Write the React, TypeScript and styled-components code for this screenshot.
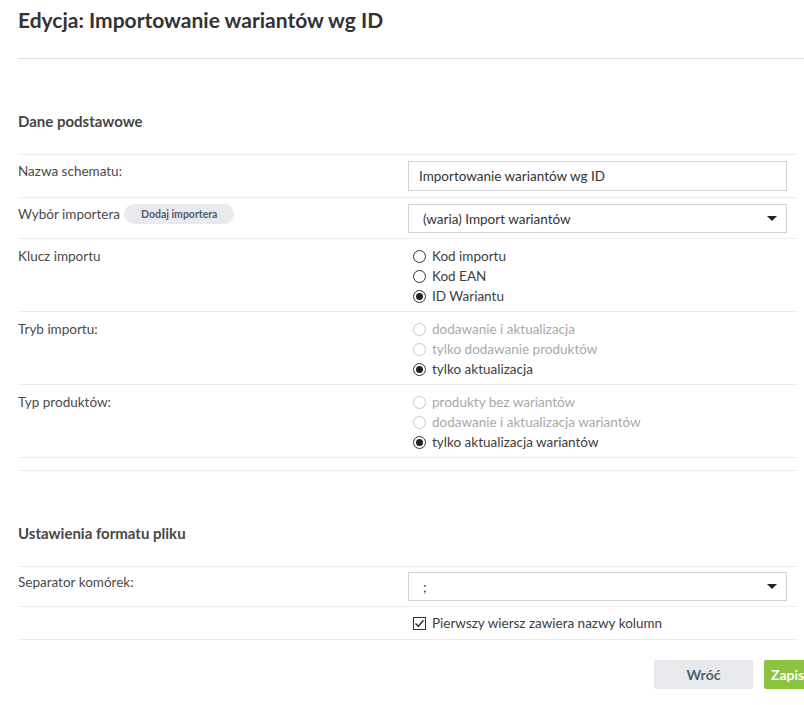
import React from 'react';
import styled, { createGlobalStyle } from 'styled-components';

const GlobalStyle = createGlobalStyle`
  html, body {
    margin: 0;
    padding: 0;
    background: #fff;
    overflow-x: hidden;
  }
  body {
    font-family: Lato, "Liberation Sans", sans-serif;
    color: #4a4a4a;
  }
`;

const Page = styled.div`
  padding-left: 18px;
  width: 779px;
`;

const TitleBar = styled.div`
  padding: 6px 0 24px;
  border-bottom: 1px solid #e2e2e2;
  margin-right: -60px;
  & > h1 {
    margin: 0;
    font-size: 21px;
    line-height: 28px;
    font-weight: 700;
    color: #333;
  }
`;

const SectionTitle = styled.h2`
  margin: 0;
  padding: 52px 0 23px;
  font-size: 15px;
  line-height: 20px;
  font-weight: 700;
  color: #474747;
  border-bottom: 1px solid #ececec;
`;

const Row = styled.div<{ pad?: string }>`
  display: grid;
  grid-template-columns: 390px 379px;
  padding: ${p => p.pad || '6px 0'};
  border-bottom: 1px solid #ececec;
`;

const Spacer = styled.div`
  height: 12px;
  border-bottom: 1px solid #ececec;
`;

const Label = styled.div`
  display: flex;
  align-items: flex-start;
  gap: 4px;
  font-size: 13.5px;
  line-height: 20px;
  color: #4a4a4a;
`;

const Pill = styled.span`
  display: inline-block;
  background: #e9eaed;
  color: #4e6073;
  font-size: 10.5px;
  font-weight: 700;
  line-height: 20px;
  padding: 0 17px;
  border-radius: 10px;
`;

const TextInput = styled.div`
  height: 30px;
  border: 1px solid #d4d4d4;
  box-sizing: border-box;
  padding-left: 10px;
  display: flex;
  align-items: center;
  font-size: 13.5px;
  color: #333;
`;

const Select = styled.div`
  height: 29px;
  border: 1px solid #d4d4d4;
  box-sizing: border-box;
  padding: 0 9px 0 14px;
  display: flex;
  align-items: center;
  justify-content: space-between;
  font-size: 13.5px;
  color: #333;
`;

const Arrow = styled.span`
  width: 0;
  height: 0;
  border-left: 5px solid transparent;
  border-right: 5px solid transparent;
  border-top: 5px solid #222;
`;

const Options = styled.div`
  display: flex;
  flex-direction: column;
  padding-left: 5px;
`;

const Option = styled.div<{ disabled?: boolean }>`
  display: flex;
  align-items: center;
  gap: 6px;
  height: 20px;
  font-size: 13.5px;
  color: ${p => (p.disabled ? '#a9a9a9' : '#3d3d3d')};
`;

const Radio = styled.span<{ checked?: boolean; disabled?: boolean }>`
  width: 13px;
  height: 13px;
  box-sizing: border-box;
  border-radius: 50%;
  border: 1px solid ${p => (p.disabled ? '#c8c8c8' : '#333')};
  display: flex;
  align-items: center;
  justify-content: center;
  &::after {
    content: '';
    display: ${p => (p.checked ? 'block' : 'none')};
    width: 7px;
    height: 7px;
    border-radius: 50%;
    background: #222;
  }
`;

const Checkbox = styled.span`
  width: 13px;
  height: 13px;
  box-sizing: border-box;
  border: 1px solid #333;
  display: flex;
  align-items: center;
  justify-content: center;
`;

const Actions = styled.div`
  display: flex;
  justify-content: flex-end;
  gap: 11px;
  margin-right: -47px;
  padding-top: 20px;
`;

const Button = styled.button<{ primary?: boolean }>`
  width: ${p => (p.primary ? '80px' : '99px')};
  height: 29px;
  border: none;
  border-radius: 2px;
  font-family: Lato, "Liberation Sans", sans-serif;
  font-size: 14px;
  font-weight: 700;
  text-align: ${p => (p.primary ? 'left' : 'center')};
  padding: ${p => (p.primary ? '0 0 0 7px' : '0')};
  background: ${p => (p.primary ? '#8cc43f' : '#e7e9ec')};
  color: ${p => (p.primary ? '#fff' : '#4f5f70')};
`;

type Opt = { label: string; checked?: boolean; disabled?: boolean };

const RadioGroup = ({ items }: { items: Opt[] }) => (
  <Options>
    {items.map(o => (
      <Option key={o.label} disabled={o.disabled}>
        <Radio checked={o.checked} disabled={o.disabled} />
        {o.label}
      </Option>
    ))}
  </Options>
);

export default function App() {
  return (
    <>
      <GlobalStyle />
      <Page>
        <TitleBar>
          <h1>Edycja: Importowanie wariantów wg ID</h1>
        </TitleBar>

        <SectionTitle>Dane podstawowe</SectionTitle>
        <Row>
          <Label>Nazwa schematu:</Label>
          <TextInput>Importowanie wariantów wg ID</TextInput>
        </Row>
        <Row pad="6px 0 5px">
          <Label>
            Wybór importera <Pill>Dodaj importera</Pill>
          </Label>
          <Select>
            (waria) Import wariantów
            <Arrow />
          </Select>
        </Row>
        <Row pad="7px 0 5px">
          <Label>Klucz importu</Label>
          <RadioGroup
            items={[
              { label: 'Kod importu' },
              { label: 'Kod EAN' },
              { label: 'ID Wariantu', checked: true },
            ]}
          />
        </Row>
        <Row pad="7px 0 5px">
          <Label>Tryb importu:</Label>
          <RadioGroup
            items={[
              { label: 'dodawanie i aktualizacja', disabled: true },
              { label: 'tylko dodawanie produktów', disabled: true },
              { label: 'tylko aktualizacja', checked: true },
            ]}
          />
        </Row>
        <Row pad="7px 0 5px">
          <Label>Typ produktów:</Label>
          <RadioGroup
            items={[
              { label: 'produkty bez wariantów', disabled: true },
              { label: 'dodawanie i aktualizacja wariantów', disabled: true },
              { label: 'tylko aktualizacja wariantów', checked: true },
            ]}
          />
        </Row>
        <Spacer />

        <SectionTitle>Ustawienia formatu pliku</SectionTitle>
        <Row pad="5px 0 5px">
          <Label>Separator komórek:</Label>
          <Select>
            ;
            <Arrow />
          </Select>
        </Row>
        <Row pad="6px 0 6px">
          <div />
          <Options>
            <Option>
              <Checkbox>
                <svg width="11" height="11" viewBox="0 0 11 11">
                  <path d="M1.5 5.5 L4.3 8.3 L9.5 2.3" fill="none" stroke="#222" strokeWidth="1.3" />
                </svg>
              </Checkbox>
              Pierwszy wiersz zawiera nazwy kolumn
            </Option>
          </Options>
        </Row>

        <Actions>
          <Button>Wróć</Button>
          <Button primary>Zapisz</Button>
        </Actions>
      </Page>
    </>
  );
}
